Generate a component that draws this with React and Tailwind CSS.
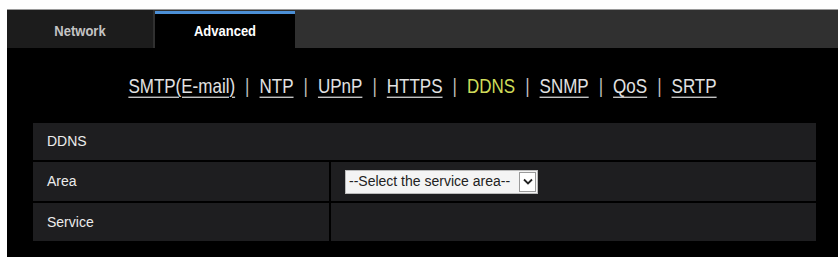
const links = ['SMTP(E-mail)', 'NTP', 'UPnP', 'HTTPS', 'DDNS', 'SNMP', 'QoS', 'SRTP'];

export default function App() {
    return (
        <div className="w-[840px] h-[257px] bg-white pl-[7px] pt-[9px] pr-[2px] overflow-hidden" style={{ fontFamily: '"Liberation Sans", Arial, sans-serif' }}>
            <div className="h-full bg-black flex flex-col border-t border-[#9a9a9a]">
                {/* tabs */}
                <div className="h-[38px] bg-[#303030] flex items-stretch shrink-0">
                    <div className="w-[146px] bg-[#1c1c1c] flex items-center justify-center pt-[3px] text-[13px] font-bold text-[#c4c4c4]">
                        <span className="scale-y-115">Network</span>
                    </div>
                    <div className="ml-[2px] w-[140px] mt-[1px] bg-black border-t-[3px] border-[#4b8fd6] flex items-center justify-center text-[13px] font-bold text-white">
                        <span className="scale-y-115">Advanced</span>
                    </div>
                </div>

                {/* sub menu */}
                <div className="h-[75px] flex items-center justify-center text-[17px] text-[#e2e2e2] pt-[3px]">
                    <div className="flex items-center scale-y-120">
                        {links.map((l, i) => (
                            <span key={l} className="flex items-center">
                                {i > 0 && <span className="mx-[10px] text-[#bdbdbd]">|</span>}
                                {l === 'DDNS' ? (
                                    <span className="text-[#cfdc5a]">{l}</span>
                                ) : (
                                    <span className="underline underline-offset-[3px] decoration-1">{l}</span>
                                )}
                            </span>
                        ))}
                    </div>
                </div>

                {/* table */}
                <div className="ml-[26px] mr-[22px] flex flex-col gap-[2px] text-[14px] text-[#ececec]">
                    <div className="h-[37px] bg-[#1e1e20] flex items-center px-[14px]">DDNS</div>
                    <div className="h-[39px] flex gap-[2px]">
                        <div className="w-[296px] bg-[#1e1e20] flex items-center px-[14px]">Area</div>
                        <div className="flex-1 bg-[#1e1e20] flex items-center pl-[14px]">
                            <div className="h-[24px] w-[193px] bg-[#f4f4f4] border border-[#bbbbbb] flex items-center pl-[3px] pr-[1px] text-[#222] text-[14px]">
                                <span className="flex-1 whitespace-nowrap">--Select the service area--</span>
                                <span className="w-[17px] h-[20px] border border-[#9a9a9a] bg-white flex items-center justify-center">
                                    <svg width="10" height="7" viewBox="0 0 10 7">
                                        <path d="M1 1.5 L5 5.5 L9 1.5" fill="none" stroke="#222" strokeWidth="1.8" />
                                    </svg>
                                </span>
                            </div>
                        </div>
                    </div>
                    <div className="h-[38px] flex gap-[2px]">
                        <div className="w-[296px] bg-[#1e1e20] flex items-center px-[14px]">Service</div>
                        <div className="flex-1 bg-[#1e1e20]"></div>
                    </div>
                </div>
            </div>
        </div>
    );
}
